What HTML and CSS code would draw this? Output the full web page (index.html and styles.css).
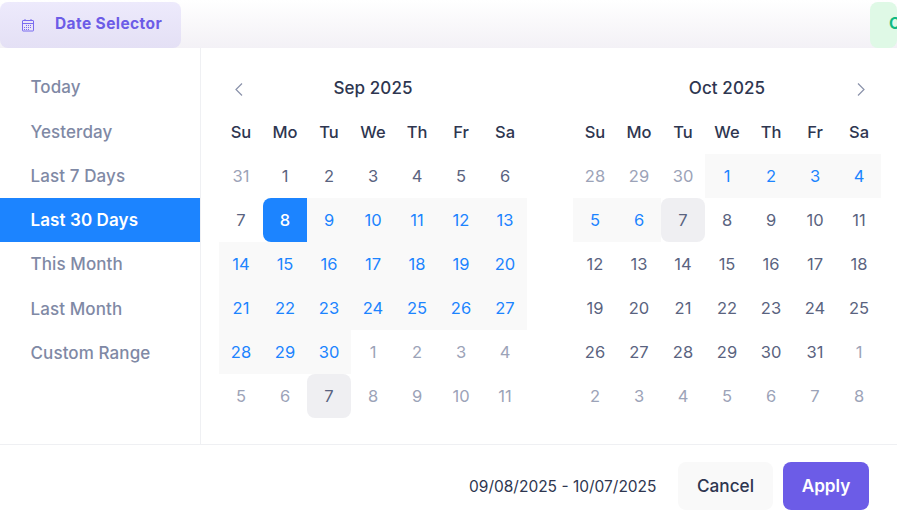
FILE: index.html
```html
<!DOCTYPE html>
<html lang="en">
<head>
  <meta charset="UTF-8">
  <meta name="viewport" content="width=device-width, initial-scale=1.0">
  <title>Date Selector</title>
  <link rel="stylesheet" href="styles.css">
</head>
<body>
  <div class="topbar">
    <div class="tab tab-purple">
      <svg class="tab-icon" viewBox="0 0 14 14" width="14" height="14" fill="none" stroke="currentColor">
        <rect x="1.5" y="2.5" width="11" height="10.5" rx="0.5"/>
        <path d="M1.5 5.5h11M4 1v2M10 1v2" />
        <path d="M5 7.5h6M3 9.5h8M3 11.5h6" stroke-dasharray="1 1"/>
      </svg>
      <span>Date Selector</span>
    </div>
    <div class="tab tab-green"><span>Orders</span></div>
  </div>

  <div class="picker">
    <div class="picker-main">
      <ul class="ranges">
        <li>Today</li>
        <li>Yesterday</li>
        <li>Last 7 Days</li>
        <li class="active">Last 30 Days</li>
        <li>This Month</li>
        <li>Last Month</li>
        <li>Custom Range</li>
      </ul>

      <div class="calendars">
        <div class="calendar">
          <div class="cal-head">
            <svg class="nav" viewBox="0 0 12 16" width="12" height="16"><path d="M9 3.5 3 9.5 9 15.5"/></svg>
            <span class="month">Sep 2025</span>
            <span class="nav-space"></span>
          </div>
          <div class="days">
            <b>Su</b><b>Mo</b><b>Tu</b><b>We</b><b>Th</b><b>Fr</b><b>Sa</b>
            <span class="off">31</span><span>1</span><span>2</span><span>3</span><span>4</span><span>5</span><span>6</span>
            <span>7</span><span class="start">8</span><span class="range">9</span><span class="range">10</span><span class="range">11</span><span class="range">12</span><span class="range">13</span>
            <span class="range">14</span><span class="range">15</span><span class="range">16</span><span class="range">17</span><span class="range">18</span><span class="range">19</span><span class="range">20</span>
            <span class="range">21</span><span class="range">22</span><span class="range">23</span><span class="range">24</span><span class="range">25</span><span class="range">26</span><span class="range">27</span>
            <span class="range">28</span><span class="range">29</span><span class="range">30</span><span class="off">1</span><span class="off">2</span><span class="off">3</span><span class="off">4</span>
            <span class="off">5</span><span class="off">6</span><span class="today">7</span><span class="off">8</span><span class="off">9</span><span class="off">10</span><span class="off">11</span>
          </div>
        </div>

        <div class="calendar">
          <div class="cal-head">
            <span class="nav-space"></span>
            <span class="month">Oct 2025</span>
            <svg class="nav" viewBox="0 0 12 16" width="12" height="16"><path d="M3 3.5 9 9.5 3 15.5"/></svg>
          </div>
          <div class="days">
            <b>Su</b><b>Mo</b><b>Tu</b><b>We</b><b>Th</b><b>Fr</b><b>Sa</b>
            <span class="off">28</span><span class="off">29</span><span class="off">30</span><span class="range">1</span><span class="range">2</span><span class="range">3</span><span class="range">4</span>
            <span class="range">5</span><span class="range">6</span><span class="today end">7</span><span>8</span><span>9</span><span>10</span><span>11</span>
            <span>12</span><span>13</span><span>14</span><span>15</span><span>16</span><span>17</span><span>18</span>
            <span>19</span><span>20</span><span>21</span><span>22</span><span>23</span><span>24</span><span>25</span>
            <span>26</span><span>27</span><span>28</span><span>29</span><span>30</span><span>31</span><span class="off">1</span>
            <span class="off">2</span><span class="off">3</span><span class="off">4</span><span class="off">5</span><span class="off">6</span><span class="off">7</span><span class="off">8</span>
          </div>
        </div>
      </div>
    </div>

    <div class="picker-foot">
      <span class="selected">09/08/2025 - 10/07/2025</span>
      <button class="btn btn-cancel">Cancel</button>
      <button class="btn btn-apply">Apply</button>
    </div>
  </div>
</body>
</html>
```

FILE: styles.css
```css
* {
  box-sizing: border-box;
}

body {
  margin: 0;
  width: 897px;
  height: 526px;
  overflow: hidden;
  background: #ffffff;
  font-family: "Inter", sans-serif;
  color: #2e3650;
}

.topbar {
  display: flex;
  justify-content: space-between;
  align-items: flex-end;
  height: 48px;
  background: linear-gradient(to bottom, #ffffff, #f3f1f6);
}

.tab {
  display: flex;
  align-items: center;
  height: 46px;
  border-radius: 8px;
  font-size: 15.5px;
  font-weight: 700;
  letter-spacing: 0.4px;
}

.tab-purple {
  width: 181px;
  padding: 0 0 3px 21px;
  gap: 20px;
  color: #6c5ce7;
  background: linear-gradient(to bottom, #edeafc, #e4e0f5);
}

.tab-icon {
  flex: none;
  margin-top: 3px;
  color: #7b6cf0;
}

.tab-green {
  width: 27px;
  padding: 0 0 3px 19px;
  overflow: hidden;
  color: #10b981;
  background: #dff9e6;
}

.picker {
  background: #ffffff;
  border-radius: 8px 8px 0 0;
}

.picker-main {
  display: flex;
  height: 396px;
}

.ranges {
  width: 201px;
  margin: 0;
  padding: 17.4px 0 0;
  list-style: none;
  border-right: 1px solid #eff0f3;
}

.ranges li {
  height: 44.25px;
  padding-left: 30.5px;
  line-height: 44px;
  font-size: 17px;
  font-weight: 500;
  letter-spacing: 0.1px;
  color: #7f89a5;
}

.ranges li.active {
  width: 200px;
  color: #ffffff;
  font-weight: 600;
  background: #1c84ff;
}

.calendars {
  display: flex;
  gap: 46px;
  padding-left: 18px;
}

.calendar {
  width: 308px;
}

.cal-head {
  display: flex;
  justify-content: space-between;
  align-items: center;
  height: 62px;
  padding: 18px 14px 0;
}

.nav {
  fill: none;
  stroke: #8a92aa;
  stroke-width: 1.2;
}

.nav-space {
  width: 12px;
}

.month {
  font-size: 17px;
  font-weight: 500;
  letter-spacing: 0.1px;
  color: #2e3650;
}

.days {
  display: grid;
  grid-template-columns: repeat(7, 44px);
  grid-auto-rows: 44px;
  font-size: 16.5px;
}

.days b,
.days span {
  display: flex;
  align-items: center;
  justify-content: center;
}

.days b {
  font-weight: 500;
  color: #2e3650;
}

.days span {
  color: #5a6380;
}

.days .off {
  color: #9ca3b8;
}

.days .range {
  color: #1c84ff;
  background: #f9f9f9;
}

.days .start {
  color: #ffffff;
  font-weight: 500;
  background: #1c84ff;
  border-radius: 8px 0 0 8px;
}

.days .today {
  color: #5a6380;
  background: #efeff2;
  border-radius: 8px;
}

.picker-foot {
  display: flex;
  align-items: center;
  height: 82px;
  padding: 0 28px 0 469px;
  border-top: 1px solid #eff0f3;
}

.selected {
  margin-right: auto;
  padding-top: 2px;
  font-size: 15.5px;
  white-space: nowrap;
  color: #2e3650;
}

.btn {
  height: 48px;
  flex: none;
  border: none;
  border-radius: 8px;
  font-family: inherit;
  font-size: 17.2px;
  font-weight: 500;
  cursor: pointer;
}

.btn-cancel {
  width: 95px;
  margin-right: 10px;
  color: #2e3650;
  background: #f9f9f9;
}

.btn-apply {
  width: 86px;
  color: #ffffff;
  font-weight: 600;
  background: #6c5ce7;
}
```
